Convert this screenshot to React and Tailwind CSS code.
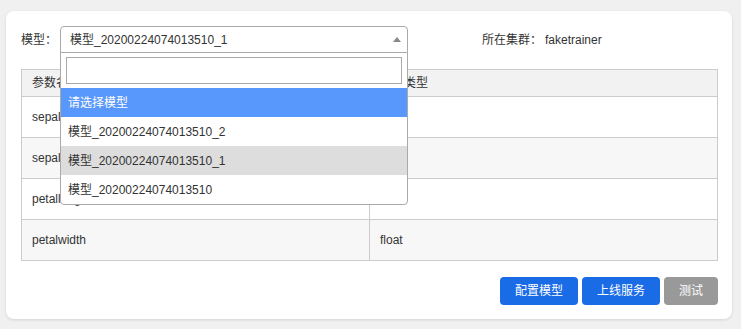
import { useState } from 'react';

const rows = [
  { name: 'sepallength', type: 'float' },
  { name: 'sepalwidth', type: 'float' },
  { name: 'petallength', type: 'float' },
  { name: 'petalwidth', type: 'float' },
];

const options = [
  '请选择模型',
  '模型_20200224074013510_2',
  '模型_20200224074013510_1',
  '模型_20200224074013510',
];

export default function App() {
  const [selected] = useState('模型_20200224074013510_1');
  const hovered = 0;

  return (
    <div className="min-h-[329px] bg-[#f0f0f0] pt-[11px] pl-[6px] pr-[9px] pb-[12px] text-[12px] text-[#333] font-['Liberation_Sans','Noto_Sans_CJK_SC',sans-serif]">
      <div className="bg-white rounded-lg shadow-[0_1px_3px_rgba(0,0,0,0.12)] pl-[15px] pr-[14px] pt-[15px] pb-[14px]">

        {/* Top row */}
        <div className="flex items-center h-[27px]">
          <span className="w-[39px]">模型：</span>
          <div className="relative w-[348px] h-[27px]">
            <div className="h-full flex items-center pl-[9px] border border-[#aaa] rounded-t bg-white">
              <span className="flex-1">{selected}</span>
              <span className="mr-[6px] w-0 h-0 border-x-4 border-x-transparent border-b-[5px] border-b-[#888]" />
            </div>

            {/* Dropdown */}
            <div className="absolute left-0 top-[26px] w-[348px] z-10 bg-white border border-[#aaa] rounded-b">
              <div className="p-1">
                <div className="h-[27px] mx-px border border-[#aaa] bg-white" />
              </div>
              {options.map((o, i) => (
                <div key={o}
                  className={
                    'h-[29px] flex items-center pl-[7px] ' +
                    (i === hovered ? 'bg-[#5897fb] text-white' : o === selected ? 'bg-[#ddd]' : '')
                  }>
                  {o}
                </div>
              ))}
            </div>
          </div>
          <span className="ml-[74px]">所在集群：</span>
          <span className="ml-[3px]">faketrainer</span>
        </div>

        {/* Table */}
        <table className="mt-4 w-full border-collapse border border-[#ccc]">
          <thead>
            <tr className="h-[27px] bg-[#f2f2f2]">
              <th className="w-[348px] border border-[#ccc] text-left font-normal pl-[10px]">参数名</th>
              <th className="border border-[#ccc] text-left font-normal pl-[10px]">参数类型</th>
            </tr>
          </thead>
          <tbody>
            {rows.map((r, i) => (
              <tr key={r.name} className={'h-[41px] ' + (i % 2 ? 'bg-[#f7f7f7]' : 'bg-white')}>
                <td className="border border-[#ccc] pl-[10px]">{r.name}</td>
                <td className="border border-[#ccc] pl-[10px]">{r.type}</td>
              </tr>
            ))}
          </tbody>
        </table>

        {/* Actions */}
        <div className="mt-4 flex justify-end gap-1">
          <button className="w-[78px] h-[28px] rounded-sm bg-[#1a6be6] text-white">配置模型</button>
          <button className="w-[78px] h-[28px] rounded-sm bg-[#1a6be6] text-white">上线服务</button>
          <button className="w-[54px] h-[28px] rounded-sm bg-[#999] text-white">测试</button>
        </div>
      </div>
    </div>
  );
}
